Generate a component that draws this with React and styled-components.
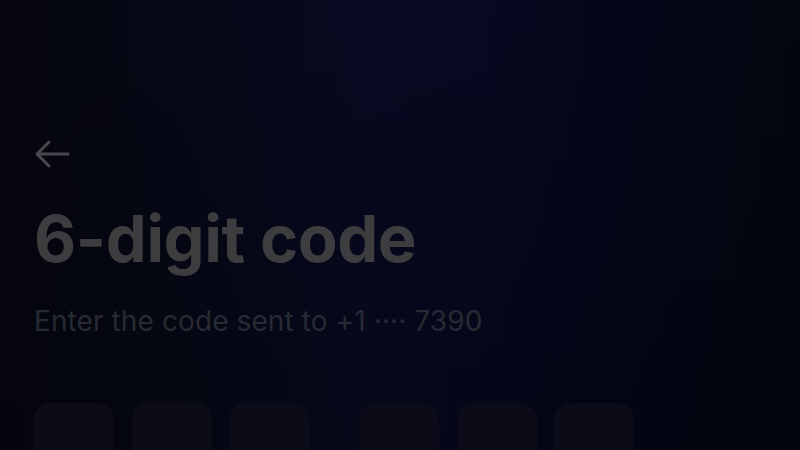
import React from "react";
import styled, { createGlobalStyle } from "styled-components";

const Global = createGlobalStyle`
  html, body { margin: 0; padding: 0; }
  body { background: #04050f; font-family: Inter, "Noto Sans", sans-serif; }
`;

const Screen = styled.div`
  width: 800px;
  height: 450px;
  overflow: hidden;
  box-sizing: border-box;
  padding: 138px 0 0 34px;
  background:
    linear-gradient(180deg, rgba(0,0,0,0) 0%, rgba(2,3,8,0.35) 100%),
    linear-gradient(90deg, #05060f 0%, #060817 25%, #070a21 45%, #060920 60%, #04061a 75%, #03050f 100%);
  display: flex;
  flex-direction: column;
`;

const BackButton = styled.button`
  width: 40px;
  height: 36px;
  padding: 0;
  margin: 0;
  border: 0;
  background: none;
  display: flex;
  align-items: center;
  color: #48484c;
`;

const Title = styled.h1`
  margin: 31px 0 0;
  font-size: 65px;
  line-height: 76px;
  font-weight: 700;
  letter-spacing: -0.4px;
  color: #3d3d40;
`;

const Subtitle = styled.p`
  margin: 27px 0 0;
  font-size: 28px;
  line-height: 34px;
  font-weight: 400;
  letter-spacing: 0.1px;
  color: #282a33;
`;

const CodeRow = styled.div`
  margin-top: 65px;
  display: flex;
  align-items: flex-start;
`;

const Group = styled.div`
  display: flex;
  gap: 17.5px;
  margin-right: ${(p) => (p.$spaced ? "50px" : "0")};
`;

const Digit = styled.div`
  width: 80px;
  height: 92px;
  border-radius: 16px;
  background: #0b0c18;
  flex: none;
`;

export default function App() {
  return (
    <>
      <Global />
      <Screen>
        <BackButton aria-label="Back">
          <svg width="36" height="32" viewBox="0 0 36 32" fill="none">
            <path d="M34 16H3M15 4L3 16l12 12" stroke="currentColor" strokeWidth="3" strokeLinecap="round" strokeLinejoin="round" />
          </svg>
        </BackButton>
        <Title>6-digit code</Title>
        <Subtitle>Enter the code sent to +1 ···· 7390</Subtitle>
        <CodeRow>
          <Group $spaced>
            <Digit /><Digit /><Digit />
          </Group>
          <Group>
            <Digit /><Digit /><Digit />
          </Group>
        </CodeRow>
      </Screen>
    </>
  );
}
